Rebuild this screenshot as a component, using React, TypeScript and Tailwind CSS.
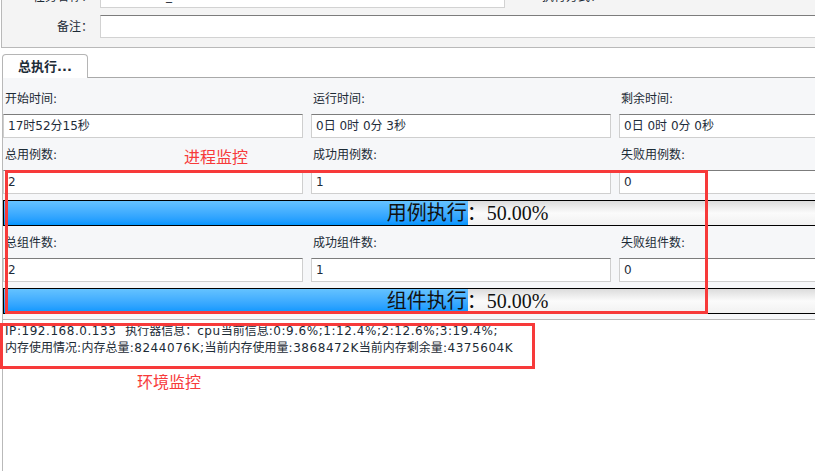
import React from "react";

const labelCls = "h-[18px] leading-[18px] pl-[2px] text-[#1c2b36] whitespace-nowrap";
const inputCls =
  "mt-[6px] h-[24px] bg-white border border-[#cfcfcf] border-t-[#7c7c7c] pl-[4px] leading-[22px] text-[#1e2c3a] whitespace-nowrap";

type Field = { label: string; value: string };

function FieldRow({ fields, first }: { fields: Field[]; first?: boolean }) {
  return (
    <div
      className={
        "grid w-max grid-cols-[300px_300px_300px] gap-x-[8px] " + (first ? "" : "mt-[8px]")
      }
    >
      {fields.map((f) => (
        <div key={f.label}>
          <div className={labelCls}>{f.label}</div>
          <div className={inputCls}>{f.value}</div>
        </div>
      ))}
    </div>
  );
}

function ProgressBar({ label, percent }: { label: string; percent: number }) {
  return (
    <div className="relative mt-[6px] flex h-[26px] w-[928px] border-y border-l border-black bg-linear-to-b from-[#dcdcdc] via-[#fbfbfb] to-[#f1f1f1]">
      <div
        className="h-full bg-linear-to-b from-[#64c2ff] to-[#0096ff]"
        style={{ width: `${percent}%` }}
      />
      <div className="absolute inset-0 flex items-center justify-center font-['Liberation_Serif','Noto_Sans_CJK_SC',serif] text-[20px] text-[#111]">
        {label}：{percent.toFixed(2)}%
      </div>
    </div>
  );
}

// latin runs are a bit wider in the original UI font
function InfoLine({ text }: { text: string }) {
  const parts = text.split(/([\x20-\x7e]+)/).filter(Boolean);
  return (
    <div className="whitespace-pre">
      {parts.map((p, i) =>
        /^[\x20-\x7e]+$/.test(p) ? (
          <span key={i} className="tracking-[0.55px]">
            {p}
          </span>
        ) : (
          <span key={i}>{p}</span>
        )
      )}
    </div>
  );
}

export default function App() {
  return (
    <div className="relative flex h-[471px] w-[815px] flex-col overflow-hidden bg-white font-['DejaVu_Sans','Noto_Sans_CJK_SC',sans-serif] text-[12px]">
      {/* top form panel (scrolled, first row cut off) */}
      <div className="ml-[1px] h-[48px] shrink-0 overflow-hidden border-b border-l border-[#b9b9b9] bg-[#f4f4f4]">
        <div className="mt-[-15px] flex h-[23px] items-center">
          <div className="w-[91px] shrink-0 text-right text-[#1c2b36]">任务名称：</div>
          <div className="ml-[7px] h-[23px] w-[405px] shrink-0 border border-[#d2d2d2] border-t-[#7c7c7c] bg-white pl-[4px] leading-[21px] text-[#1e2c3a]">
            20180718_175215000001
          </div>
          <div className="ml-[37px] shrink-0 text-[#1c2b36]">执行方式：</div>
        </div>
        <div className="mt-[7px] flex h-[23px] items-center">
          <div className="w-[91px] shrink-0 text-right text-[#1c2b36]">备注：</div>
          <div className="ml-[7px] h-[23px] w-[760px] shrink-0 border border-[#d2d2d2] border-t-[#7c7c7c] bg-white" />
        </div>
      </div>

      {/* tab strip */}
      <div className="mt-[6px] flex h-[24px] shrink-0">
        <div className="ml-[2px] flex w-[86px] items-center rounded-t-[4px] border border-b-0 border-[#b5b5b5] bg-white pl-[15px] text-[13px] font-bold text-[#1c2b36]">
          总执行...
        </div>
        <div className="flex-1 border-b border-[#a9a9a9]" />
      </div>

      {/* execution content */}
      <div className="ml-[2px] shrink-0 border-b border-l border-[#b9b9b9] bg-[#f6f7f9] pb-[5px] pt-[12px]">
        <FieldRow
          first
          fields={[
            { label: "开始时间:", value: "17时52分15秒" },
            { label: "运行时间:", value: "0日 0时 0分 3秒" },
            { label: "剩余时间:", value: "0日 0时 0分 0秒" },
          ]}
        />
        <FieldRow
          fields={[
            { label: "总用例数:", value: "2" },
            { label: "成功用例数:", value: "1" },
            { label: "失败用例数:", value: "0" },
          ]}
        />
        <ProgressBar label="用例执行" percent={50} />
        <FieldRow
          fields={[
            { label: "总组件数:", value: "2" },
            { label: "成功组件数:", value: "1" },
            { label: "失败组件数:", value: "0" },
          ]}
        />
        <ProgressBar label="组件执行" percent={50} />
      </div>

      {/* environment info */}
      <div className="ml-[2px] flex-1 border-l border-[#b9b9b9] pl-[2px] pt-[3px] leading-[17px] text-[#1c2b36]">
        <InfoLine text="IP:192.168.0.133  执行器信息：cpu当前信息:0:9.6%;1:12.4%;2:12.6%;3:19.4%;" />
        <InfoLine text="内存使用情况:内存总量:8244076K;当前内存使用量:3868472K当前内存剩余量:4375604K" />
      </div>

      {/* red annotations */}
      <div className="pointer-events-none absolute left-[5px] top-[170px] h-[144px] w-[703px] border-[3px] border-[#f73a3a]" />
      <div className="pointer-events-none absolute left-[184px] top-[148px] text-[16px] leading-[20px] text-[#f73a3a]">
        进程监控
      </div>
      <div className="pointer-events-none absolute left-0 top-[323px] h-[46px] w-[535px] border-[3px] border-[#f73a3a]" />
      <div className="pointer-events-none absolute left-[137px] top-[373px] text-[16px] leading-[20px] text-[#f73a3a]">
        环境监控
      </div>
    </div>
  );
}
